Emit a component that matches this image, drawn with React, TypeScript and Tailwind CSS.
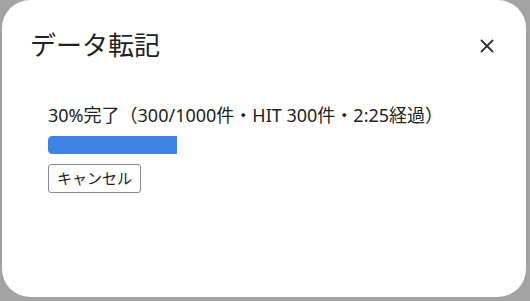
import { X } from 'lucide-react';

const font = { fontFamily: '"Noto Sans", "Noto Sans CJK JP", sans-serif' };

const TransferDialog = () => {
    const done = 300;
    const total = 1000;
    const pct = Math.round((done / total) * 100);

    return (
        <div className="w-[530px] h-[301px] bg-[#a3a3a3] overflow-hidden" style={font}>
            <div className="ml-[2px] w-[524px] h-[297px] bg-white rounded-[28px] flex flex-col">
                {/* Header */}
                <div className="flex items-center justify-between pl-[28px] pr-[28px] pt-[27px]">
                    <h1 className="text-[26px] leading-[36px] text-[#222]">データ転記</h1>
                    <button className="text-[#333] mt-[2px]">
                        <X size={22} strokeWidth={2} />
                    </button>
                </div>

                {/* Body */}
                <div className="pl-[46px] pr-[46px] pt-[40px]">
                    <p className="text-[18px] leading-[24px] text-[#222]">
                        {pct}%完了（{done}/{total}件・HIT 300件・2:25経過）
                    </p>
                    <div className="mt-[9px] h-[18px] w-[430px] rounded-l-[4px] overflow-hidden">
                        <div className="h-full bg-[#3f84e4] rounded-l-[4px]" style={{ width: `${pct}%` }} />
                    </div>
                    <button className="mt-[10px] h-[29px] px-[8px] border border-[#8a8a8a] rounded-[3px] bg-white text-[15px] text-[#222] leading-none">
                        キャンセル
                    </button>
                </div>
            </div>
        </div>
    );
};

export default function App() {
    return <TransferDialog />;
}
